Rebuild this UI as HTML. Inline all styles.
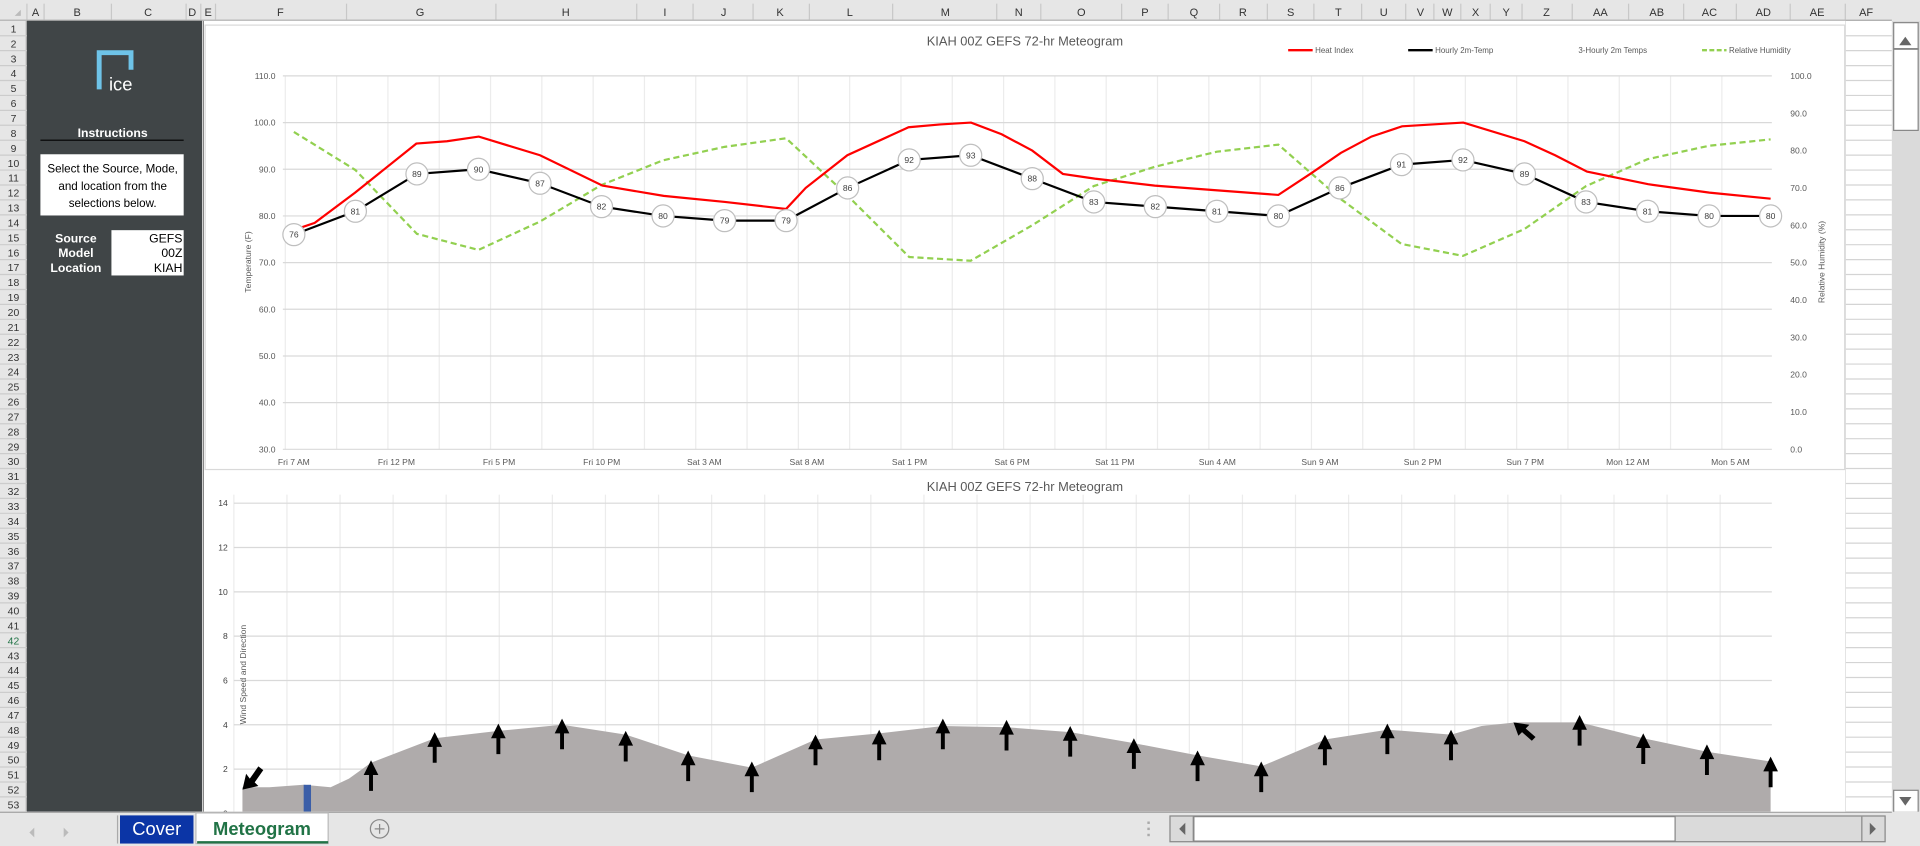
<!DOCTYPE html>
<html><head><meta charset="utf-8"><style>
*{margin:0;padding:0;box-sizing:border-box}
body{width:1920px;height:846px;overflow:hidden;background:#fff;font-family:"Liberation Sans",sans-serif}
#w{position:absolute;left:0;top:0;width:1568px;height:691px;transform:scale(1.22449,1.22431);transform-origin:0 0;background:#fff}
.a{position:absolute}
</style></head><body><div id="w">
<svg class="a" style="left:0;top:0" width="1568" height="691" font-family="Liberation Sans, sans-serif">
<!-- col header -->
<rect x="0" y="0" width="1568" height="17" fill="#e6e6e6"/>
<line x1="0" y1="16.5" x2="1545" y2="16.5" stroke="#aaa"/>
<g stroke="#c8c8c8"><line x1="22" y1="3" x2="22" y2="16"/><line x1="36" y1="3" x2="36" y2="16"/><line x1="91" y1="3" x2="91" y2="16"/><line x1="152" y1="3" x2="152" y2="16"/><line x1="164" y1="3" x2="164" y2="16"/><line x1="176" y1="3" x2="176" y2="16"/><line x1="283" y1="3" x2="283" y2="16"/><line x1="405" y1="3" x2="405" y2="16"/><line x1="520" y1="3" x2="520" y2="16"/><line x1="566" y1="3" x2="566" y2="16"/><line x1="615" y1="3" x2="615" y2="16"/><line x1="661" y1="3" x2="661" y2="16"/><line x1="729" y1="3" x2="729" y2="16"/><line x1="814" y1="3" x2="814" y2="16"/><line x1="850" y1="3" x2="850" y2="16"/><line x1="916" y1="3" x2="916" y2="16"/><line x1="954" y1="3" x2="954" y2="16"/><line x1="996" y1="3" x2="996" y2="16"/><line x1="1035" y1="3" x2="1035" y2="16"/><line x1="1073" y1="3" x2="1073" y2="16"/><line x1="1112" y1="3" x2="1112" y2="16"/><line x1="1148" y1="3" x2="1148" y2="16"/><line x1="1171" y1="3" x2="1171" y2="16"/><line x1="1193" y1="3" x2="1193" y2="16"/><line x1="1217" y1="3" x2="1217" y2="16"/><line x1="1243" y1="3" x2="1243" y2="16"/><line x1="1284" y1="3" x2="1284" y2="16"/><line x1="1330" y1="3" x2="1330" y2="16"/><line x1="1375" y1="3" x2="1375" y2="16"/><line x1="1418" y1="3" x2="1418" y2="16"/><line x1="1462" y1="3" x2="1462" y2="16"/><line x1="1507" y1="3" x2="1507" y2="16"/></g>
<g font-size="9" fill="#333" text-anchor="middle"><text x="29" y="13">A</text><text x="63" y="13">B</text><text x="121" y="13">C</text><text x="157" y="13">D</text><text x="170" y="13">E</text><text x="229" y="13">F</text><text x="343" y="13">G</text><text x="462" y="13">H</text><text x="543" y="13">I</text><text x="591" y="13">J</text><text x="637" y="13">K</text><text x="694" y="13">L</text><text x="772" y="13">M</text><text x="832" y="13">N</text><text x="883" y="13">O</text><text x="935" y="13">P</text><text x="975" y="13">Q</text><text x="1015" y="13">R</text><text x="1054" y="13">S</text><text x="1093" y="13">T</text><text x="1130" y="13">U</text><text x="1160" y="13">V</text><text x="1182" y="13">W</text><text x="1205" y="13">X</text><text x="1230" y="13">Y</text><text x="1263" y="13">Z</text><text x="1307" y="13">AA</text><text x="1353" y="13">AB</text><text x="1396" y="13">AC</text><text x="1440" y="13">AD</text><text x="1484" y="13">AE</text><text x="1524" y="13">AF</text></g>
<polygon points="17,13 17,8 12,13" fill="#bbb"/>
<!-- row header -->
<rect x="0" y="17" width="22" height="646" fill="#e6e6e6"/>
<line x1="21.5" y1="17" x2="21.5" y2="663" stroke="#aaa"/>
<g id="rows" font-size="8.5" fill="#333" text-anchor="middle"></g>
<!-- right grid -->
<g id="rg" stroke="#d4d4d4"></g>
<line x1="1507" y1="17" x2="1507" y2="663" stroke="#d4d4d4"/>
<!-- sidebar -->
<rect x="22" y="17" width="143" height="646" fill="#404547"/>
<path d="M81,73 V43 H107 V57" fill="none" stroke="#6ec3e8" stroke-width="4"/>
<text x="89" y="74" font-size="15" fill="#fff">ice</text>
<text x="92" y="112" font-size="10" font-weight="bold" fill="#fff" text-anchor="middle">Instructions</text>
<line x1="33" y1="114.5" x2="150" y2="114.5" stroke="#000"/>
<rect x="33" y="126" width="117" height="50" fill="#fff"/>
<g font-size="9.5" fill="#000" text-anchor="middle"><text x="92" y="141">Select the Source, Mode,</text><text x="92" y="155">and location from the</text><text x="92" y="169">selections below.</text></g>
<rect x="91" y="188" width="59" height="37" fill="#fff"/>
<g font-size="10" font-weight="bold" fill="#fff" text-anchor="middle"><text x="62" y="198">Source</text><text x="62" y="210">Model</text><text x="62" y="222">Location</text></g>
<g font-size="10" fill="#000" text-anchor="end"><text x="149" y="198">GEFS</text><text x="149" y="210">00Z</text><text x="149" y="222">KIAH</text></g>
<!-- chart areas -->
<rect x="165" y="17" width="1342" height="646" fill="#fff"/>
<line x1="166" y1="17" x2="166" y2="663" stroke="#777"/>
<rect x="167.5" y="20.5" width="1339" height="363" fill="#fff" stroke="#d9d9d9"/>
<text x="837" y="37" font-size="10.5" fill="#595959" text-anchor="middle">KIAH 00Z GEFS 72-hr Meteogram</text>
<g font-size="6.5" fill="#595959"><line x1="1052" y1="41" x2="1072" y2="41" stroke="#f00" stroke-width="2"/><text x="1074" y="43.5">Heat Index</text><line x1="1150" y1="41" x2="1170" y2="41" stroke="#000" stroke-width="2"/><text x="1172" y="43.5">Hourly 2m-Temp</text><text x="1289" y="43.5">3-Hourly 2m Temps</text><line x1="1390" y1="41" x2="1410" y2="41" stroke="#92d050" stroke-width="2" stroke-dasharray="4,2"/><text x="1412" y="43.5">Relative Humidity</text></g>
<g id="vg1" stroke="#ececec"></g>
<g id="hg1" stroke="#d9d9d9"></g>
<g id="yl1" font-size="7" fill="#595959"></g>
<text transform="translate(205,214) rotate(-90)" font-size="7" fill="#595959" text-anchor="middle">Temperature (F)</text>
<text transform="translate(1490,214) rotate(-90)" font-size="7" fill="#595959" text-anchor="middle">Relative Humidity (%)</text>
<g id="xl" font-size="7" fill="#595959" text-anchor="middle"></g>
<polyline id="green" fill="none" stroke="#92d050" stroke-width="1.8" stroke-dasharray="5,3"/>
<polyline id="red" fill="none" stroke="#f00" stroke-width="1.8"/>
<polyline id="blk" fill="none" stroke="#000" stroke-width="1.8"/>
<g id="lbl" font-size="7" fill="#404040" text-anchor="middle"></g>
<!-- chart 2 -->
<text x="837" y="401" font-size="10.5" fill="#595959" text-anchor="middle">KIAH 00Z GEFS 72-hr Meteogram</text>
<g id="vg2" stroke="#ececec"></g>
<g id="hg2" stroke="#d9d9d9"></g>
<g id="yl2" font-size="7" fill="#404040" text-anchor="end"></g>
<text transform="translate(201,551) rotate(-90)" font-size="7" fill="#595959" text-anchor="middle">Wind Speed and Direction</text>
<polygon fill="#afabab" points="198,643 220,643 248,641 270,643 285,636 303,623 355,603 407,597 459,592 511,600 562,617 614,627 666,604 718,599 770,593 822,594 874,598 926,607 978,617 1030,626 1082,604 1133,596 1185,600 1210,593 1238,590 1290,590 1342,603 1394,614 1446,622 1446,663 198,663"/>
<rect x="248" y="641" width="6" height="22" fill="#3b5ea8"/>
<g id="arr" fill="#000"></g>
<path d="M198,645 L201,632 L204,636 L211,626 L215,629 L208,639 L211,642 Z" fill="#000"/>
<path d="M1236,590 L1249,592 L1246,595 L1254,602 L1251,605 L1243,598 L1240,601 Z" fill="#000"/>
<!-- vertical scrollbar -->
<rect x="1545" y="17" width="23" height="646" fill="#dadada"/>
<rect x="1546.5" y="18.5" width="20" height="88" fill="#fff" stroke="#888"/>
<line x1="1546" y1="40" x2="1567" y2="40" stroke="#888" stroke-width="1.5"/>
<polygon points="1551,37 1561,37 1556,30" fill="#666"/>
<rect x="1546.5" y="645.5" width="20" height="18" fill="#fff" stroke="#888"/>
<polygon points="1551,651 1561,651 1556,658" fill="#666"/>
<!-- tab bar -->
<rect x="0" y="663" width="1568" height="28" fill="#e6e6e6"/>
<line x1="0" y1="663.5" x2="1545" y2="663.5" stroke="#aaa"/>
<polygon points="28,676 24,680 28,684" fill="#bbb"/><polygon points="52,676 56,680 52,684" fill="#bbb"/>
<line x1="96" y1="666" x2="96" y2="689" stroke="#aaa"/>
<rect x="98" y="666" width="60" height="23" fill="#0b35a6"/>
<text x="128" y="682" font-size="15" fill="#fff" text-anchor="middle">Cover</text>
<rect x="160" y="664" width="108" height="25" fill="#fff" stroke="#bbb"/>
<line x1="161" y1="688" x2="268" y2="688" stroke="#217346" stroke-width="2"/>
<text x="214" y="682" font-size="15" font-weight="bold" fill="#217346" text-anchor="middle">Meteogram</text>
<circle cx="310" cy="677" r="7.5" fill="none" stroke="#888"/>
<path d="M306,677h8M310,673v8" stroke="#888"/>
<g fill="#aaa"><rect x="937" y="671" width="2" height="2"/><rect x="937" y="676" width="2" height="2"/><rect x="937" y="681" width="2" height="2"/></g>
<rect x="955" y="666" width="585" height="22" fill="#dadada"/>
<rect x="955.5" y="666.5" width="584" height="21" fill="none" stroke="#888"/>
<rect x="975" y="667" width="393" height="20" fill="#fff" stroke="#888"/>
<line x1="974.5" y1="667" x2="974.5" y2="687" stroke="#888"/>
<polygon points="968,672 963,677 968,682" fill="#666"/>
<line x1="1520.5" y1="667" x2="1520.5" y2="687" stroke="#888"/>
<polygon points="1527,672 1532,677 1527,682" fill="#666"/>
</svg>
</div>
<script>
const NS="http://www.w3.org/2000/svg";
function el(p,t,a,txt){const e=document.createElementNS(NS,t);for(const k in a)e.setAttribute(k,a[k]);if(txt!=null)e.textContent=txt;document.getElementById(p).appendChild(e);return e}
for(let i=1;i<=53;i++){const y=17+(i-1)*12.19;el('rows','line',{x1:0,y1:y+12.19,x2:22,y2:y+12.19,stroke:'#ccc'});el('rows','text',{x:11,y:y+9.5,fill:i==42?'#217346':'#333'},i);el('rg','line',{x1:1507,y1:y+12.19,x2:1545,y2:y+12.19})}
for(let x=233;x<=1448;x+=41.9)el('vg1','line',{x1:x,y1:62,x2:x,y2:367});
for(let i=0;i<9;i++){const y=62+i*38.125;el('hg1','line',{x1:231,y1:y,x2:1447,y2:y});el('yl1','text',{x:225,y:y+2.5,'text-anchor':'end'},(110-i*10).toFixed(1));el('yl1','text',{x:1462,y:y+2.5},(100-i*12.5>=0?[100,90,80,70,60,50,40,30,20,10,0][i]:0).toFixed(1))}
// right axis labels actually 11 ticks
document.querySelectorAll('#yl1 text[x="1462"]').forEach(e=>e.remove());
for(let i=0;i<=10;i++){const y=62+i*30.5;el('yl1','text',{x:1462,y:y+2.5},(100-i*10).toFixed(1))}
const xl=["Fri 7 AM","Fri 12 PM","Fri 5 PM","Fri 10 PM","Sat 3 AM","Sat 8 AM","Sat 1 PM","Sat 6 PM","Sat 11 PM","Sun 4 AM","Sun 9 AM","Sun 2 PM","Sun 7 PM","Mon 12 AM","Mon 5 AM"];
xl.forEach((t,i)=>el('xl','text',{x:240+i*83.8,y:380},t));
const T=[76,81,89,90,87,82,80,79,79,86,92,93,88,83,82,81,80,86,91,92,89,83,81,80,80];
const ty=v=>367-(v-30)*3.8125;
const bx=i=>240+i*50.25;
document.getElementById('blk').setAttribute('points',T.map((v,i)=>bx(i)+','+ty(v)).join(' '));
T.forEach((v,i)=>{el('lbl','circle',{cx:bx(i),cy:ty(v),r:9,fill:'#fff',stroke:'#bfbfbf'});el('lbl','text',{x:bx(i),y:ty(v)+2.5},v)});
const R=[[240,77],[257,78.5],[290,85],[340,95.5],[365,96],[391,97],[441,93],[492,86.5],[542,84.3],[592,83],[642,81.5],[658,86],[692,93],[742,99],[768,99.6],[793,100],[818,97.5],[843,94],[868,89],[894,88],[943,86.5],[993,85.5],[1044,84.5],[1070,89],[1095,93.5],[1120,97],[1145,99.2],[1170,99.6],[1195,100],[1245,96],[1270,93],[1296,89.5],[1346,86.8],[1396,85],[1446,83.7]];
document.getElementById('red').setAttribute('points',R.map(p=>p[0]+','+ty(p[1])).join(' '));
const G=[85,74.8,57.7,53.4,61,70.8,77.4,81,83.3,67.9,51.5,50.5,60,70.5,75.7,79.7,81.6,67.2,55,51.8,59,70.5,77.7,81.3,83];
document.getElementById('green').setAttribute('points',G.map((v,i)=>bx(i)+','+(367-v*3.05)).join(' '));
for(let x=191;x<=1448;x+=43.35)el('vg2','line',{x1:x,y1:404,x2:x,y2:663});
for(let i=0;i<=7;i++){const y=411+i*36.2;if(i<7)el('hg2','line',{x1:191,y1:y,x2:1447,y2:y});el('yl2','text',{x:186,y:y+2.5},14-i*2)}
const A=[[303,621],[355,598],[407,591],[459,587],[511,597],[562,613],[614,622],[666,600],[718,596],[770,587],[822,588],[874,593],[926,603],[978,613],[1030,622],[1082,600],[1133,591],[1185,596],[1290,584],[1342,599],[1394,608],[1446,618]];
A.forEach(([x,y])=>el('arr','path',{d:`M${x},${y} L${x+6},${y+12} L${x+1.6},${y+12} L${x+1.6},${y+25} L${x-1.6},${y+25} L${x-1.6},${y+12} L${x-6},${y+12} Z`}));
</script>
</body></html>
